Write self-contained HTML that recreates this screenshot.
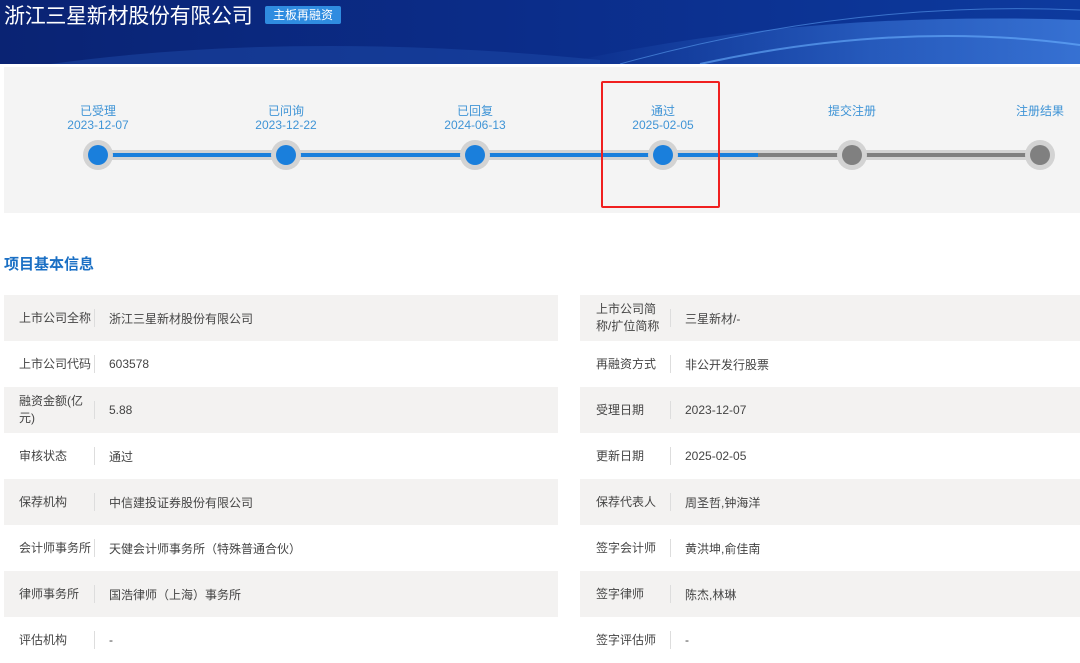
<!DOCTYPE html>
<html><head><meta charset="utf-8"><style>
*{margin:0;padding:0;box-sizing:border-box}
body{width:1080px;height:656px;overflow:hidden;background:#fff;font-family:"Liberation Sans","Noto Sans CJK SC",sans-serif;position:relative}
.hdr{position:absolute;left:0;top:0;width:1080px;height:64px;background:linear-gradient(90deg,#0a2373 0%,#0b2d8a 50%,#0d3a9e 100%);overflow:hidden}
.title{position:absolute;left:4px;top:3px;color:#fff;font-size:21px;line-height:28px;letter-spacing:-0.3px}
.badge{position:absolute;left:265px;top:6px;width:76px;height:18px;background:#2f8ce0;color:#fff;font-size:12px;line-height:18px;text-align:center;border-radius:2px}
.panel{position:absolute;left:4px;top:67px;width:1076px;height:146px;background:#f4f4f4}
.lbl{position:absolute;width:120px;text-align:center;color:#3f94d6;font-size:12px;line-height:14px}
.node{position:absolute;width:30px;height:30px;border-radius:50%;background:#d3d3d3}
.node i{position:absolute;left:5px;top:5px;width:20px;height:20px;border-radius:50%;background:#1a7fdc}
.node.g i{background:#808080}
.h{position:absolute;left:4px;top:253px;color:#1a6fc4;font-size:15px;font-weight:bold}
.row{position:absolute;height:46px;font-size:12px;color:#444}
.row.s{background:#f3f2f1}
.row .k{position:absolute;left:15px;top:0;height:46px;width:75px;display:flex;align-items:center;line-height:17px}
.row .d{position:absolute;left:90px;top:14px;width:1px;height:18px;background:#ddd}
.row .v{position:absolute;left:105px;top:0;height:46px;display:flex;align-items:center}
</style></head><body>
<div class="hdr">
<svg width="1080" height="64" style="position:absolute;left:0;top:0">
<defs><linearGradient id="w" x1="0" x2="1"><stop offset="0" stop-color="#3a7be0" stop-opacity="0"/><stop offset="0.6" stop-color="#4a8df0" stop-opacity="0.7"/><stop offset="1" stop-color="#5aa0ff" stop-opacity="0.9"/></linearGradient></defs>
<path d="M50 64 Q300 30 600 60 L600 64Z" fill="#1e4aa8" opacity="0.5"/>
<path d="M560 64 Q800 10 1080 20 L1080 64Z" fill="url(#w)" opacity="0.6"/>
<path d="M700 64 Q900 20 1080 45" stroke="#6ab0ff" stroke-width="2" fill="none" opacity="0.6"/>
<path d="M620 64 Q850 0 1080 10" stroke="#5a9cf0" stroke-width="1" fill="none" opacity="0.6"/>
</svg>
<div class="title">浙江三星新材股份有限公司</div>
<div class="badge">主板再融资</div>
</div>
<div class="panel"></div>
<div style="position:absolute;left:98px;top:150px;width:942px;height:10px;background:#d3d3d3"></div>
<div style="position:absolute;left:98px;top:153px;width:660px;height:4px;background:#1a7fdc"></div>
<div style="position:absolute;left:758px;top:153px;width:282px;height:4px;background:#808080"></div>
<div class="node" style="left:83px;top:140px"><i></i></div>
<div class="node" style="left:271px;top:140px"><i></i></div>
<div class="node" style="left:460px;top:140px"><i></i></div>
<div class="node" style="left:648px;top:140px"><i></i></div>
<div class="node g" style="left:837px;top:140px"><i></i></div>
<div class="node g" style="left:1025px;top:140px"><i></i></div>
<div class="lbl" style="left:38px;top:104px">已受理<br>2023-12-07</div>
<div class="lbl" style="left:226px;top:104px">已问询<br>2023-12-22</div>
<div class="lbl" style="left:415px;top:104px">已回复<br>2024-06-13</div>
<div class="lbl" style="left:603px;top:104px">通过<br>2025-02-05</div>
<div class="lbl" style="left:792px;top:104px">提交注册</div>
<div class="lbl" style="left:980px;top:104px">注册结果</div>
<div style="position:absolute;left:601px;top:81px;width:119px;height:127px;border:2px solid #f02020;border-radius:2px"></div>
<div class="h">项目基本信息</div>

<div class="row s" style="left:4px;top:295px;width:554px"><div class="k">上市公司全称</div><div class="d"></div><div class="v">浙江三星新材股份有限公司</div></div>
<div class="row" style="left:4px;top:341px;width:554px"><div class="k">上市公司代码</div><div class="d"></div><div class="v">603578</div></div>
<div class="row s" style="left:4px;top:387px;width:554px"><div class="k">融资金额(亿元)</div><div class="d"></div><div class="v">5.88</div></div>
<div class="row" style="left:4px;top:433px;width:554px"><div class="k">审核状态</div><div class="d"></div><div class="v">通过</div></div>
<div class="row s" style="left:4px;top:479px;width:554px"><div class="k">保荐机构</div><div class="d"></div><div class="v">中信建投证券股份有限公司</div></div>
<div class="row" style="left:4px;top:525px;width:554px"><div class="k">会计师事务所</div><div class="d"></div><div class="v">天健会计师事务所（特殊普通合伙）</div></div>
<div class="row s" style="left:4px;top:571px;width:554px"><div class="k">律师事务所</div><div class="d"></div><div class="v">国浩律师（上海）事务所</div></div>
<div class="row" style="left:4px;top:617px;width:554px"><div class="k">评估机构</div><div class="d"></div><div class="v">-</div></div>

<div class="row s" style="left:580px;top:295px;width:500px"><div class="k" style="left:16px">上市公司简称/扩位简称</div><div class="d"></div><div class="v">三星新材/-</div></div>
<div class="row" style="left:580px;top:341px;width:500px"><div class="k" style="left:16px">再融资方式</div><div class="d"></div><div class="v">非公开发行股票</div></div>
<div class="row s" style="left:580px;top:387px;width:500px"><div class="k" style="left:16px">受理日期</div><div class="d"></div><div class="v">2023-12-07</div></div>
<div class="row" style="left:580px;top:433px;width:500px"><div class="k" style="left:16px">更新日期</div><div class="d"></div><div class="v">2025-02-05</div></div>
<div class="row s" style="left:580px;top:479px;width:500px"><div class="k" style="left:16px">保荐代表人</div><div class="d"></div><div class="v">周圣哲,钟海洋</div></div>
<div class="row" style="left:580px;top:525px;width:500px"><div class="k" style="left:16px">签字会计师</div><div class="d"></div><div class="v">黄洪坤,俞佳南</div></div>
<div class="row s" style="left:580px;top:571px;width:500px"><div class="k" style="left:16px">签字律师</div><div class="d"></div><div class="v">陈杰,林琳</div></div>
<div class="row" style="left:580px;top:617px;width:500px"><div class="k" style="left:16px">签字评估师</div><div class="d"></div><div class="v">-</div></div>
</body></html>
